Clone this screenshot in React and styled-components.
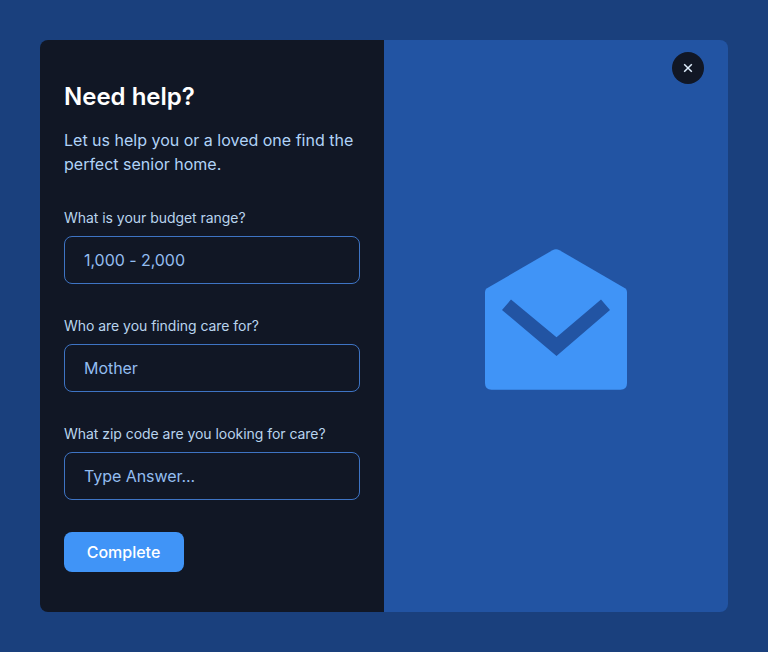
import React from "react";
import styled, { createGlobalStyle } from "styled-components";

const GlobalStyle = createGlobalStyle`
  *, *::before, *::after { box-sizing: border-box; }
  body { margin: 0; background: #1a407d; font-family: Inter, sans-serif; }
`;

const Page = styled.main`
  min-height: 100vh;
  padding: 40px;
  display: flex;
  background: #1a407d;
`;

const Card = styled.section`
  flex: 1;
  display: grid;
  grid-template-columns: 1fr 1fr;
  border-radius: 8px;
  overflow: hidden;
`;

const FormPanel = styled.form`
  display: flex;
  flex-direction: column;
  align-items: stretch;
  padding: 41px 24px 40px;
  background: #111725;
`;

const Title = styled.h1`
  margin: 0;
  font-size: 24px;
  line-height: 32px;
  font-weight: 600;
  color: #fff;
`;

const Lead = styled.p`
  margin: 15px 0 0;
  font-size: 16px;
  line-height: 24px;
  color: #b0d3f8;
`;

const Field = styled.label`
  display: flex;
  flex-direction: column;
  gap: 8px;
  margin-top: 32px;
`;

const FieldLabel = styled.span`
  font-size: 14px;
  line-height: 20px;
  letter-spacing: -0.04px;
  color: #b9d4ee;
`;

const Input = styled.input`
  height: 48px;
  padding: 0 19px;
  border: 1px solid #3e74c4;
  border-radius: 8px;
  background: transparent;
  font: 400 16px/24px Inter, sans-serif;
  letter-spacing: -0.05px;
  color: #93bdf0;
  outline: none;
  &::placeholder { color: #93bdf0; opacity: 1; }
`;

const SubmitButton = styled.button`
  align-self: flex-start;
  width: 120px;
  height: 40px;
  margin-top: 32px;
  padding: 0 1px 0 0;
  border: 0;
  border-radius: 8px;
  background: #4094f7;
  font: 500 16px/24px Inter, sans-serif;
  color: #fff;
`;

const ArtPanel = styled.div`
  display: grid;
  grid-template-rows: 32px 1fr;
  padding: 12px 24px 56px;
  background: #2254a3;
`;

const CloseButton = styled.button`
  justify-self: end;
  width: 32px;
  height: 32px;
  padding: 0;
  display: grid;
  place-items: center;
  border: 0;
  border-radius: 50%;
  background: #111725;
`;

const Envelope = styled.svg`
  place-self: center;
  display: block;
`;

const fields = [
  { label: "What is your budget range?", value: "1,000 - 2,000" },
  { label: "Who are you finding care for?", value: "Mother" },
  { label: "What zip code are you looking for care?", placeholder: "Type Answer..." },
];

export default function App() {
  return (
    <Page>
      <GlobalStyle />
      <Card>
        <FormPanel>
          <Title>Need help?</Title>
          <Lead>Let us help you or a loved one find the perfect senior home.</Lead>
          {fields.map(({ label, value, placeholder }) => (
            <Field key={label}>
              <FieldLabel>{label}</FieldLabel>
              <Input defaultValue={value} placeholder={placeholder} />
            </Field>
          ))}
          <SubmitButton type="button">Complete</SubmitButton>
        </FormPanel>
        <ArtPanel>
          <CloseButton type="button" aria-label="Close">
            <svg width="10" height="10" viewBox="0 0 10 10" fill="none" stroke="#e0effe" strokeWidth="1.5">
              <path d="M1.2 1.2L8.8 8.8M8.8 1.2L1.2 8.8" />
            </svg>
          </CloseButton>
          <Envelope width="142" height="142" viewBox="0 0 142 142" aria-hidden="true">
            <path
              fill="#4094f7"
              d="M67.5 1.2Q71 -0.6 74.5 1.2L140 39.3Q142 40.5 142 43V134Q142 140.7 135.5 140.7H6.5Q0 140.7 0 134V43Q0 40.5 2 39.3Z"
            />
            <path fill="#2254a3" d="M17 61L26 50.5L71.5 88.3L116 50.5L125 61L71.5 107Z" />
          </Envelope>
        </ArtPanel>
      </Card>
    </Page>
  );
}
